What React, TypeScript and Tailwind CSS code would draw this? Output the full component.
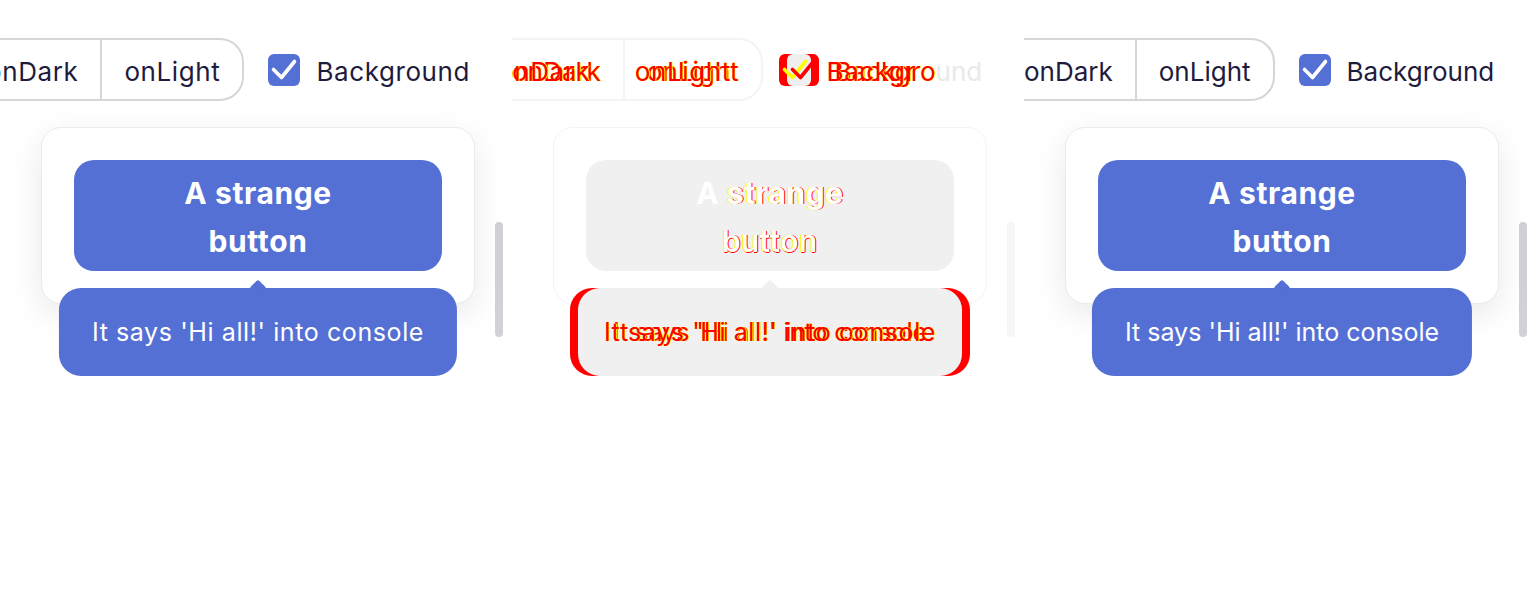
import React from 'react'

type Variant = 'left' | 'right'

const CheckMark = ({ className }: { className?: string }) => (
  <svg viewBox="0 0 32 32" fill="none" className={className}>
    <path
      d="M5.5 15.5 13.5 23.5 26.5 7.5"
      stroke="currentColor"
      strokeWidth={3.6}
      strokeLinecap="round"
      strokeLinejoin="round"
    />
  </svg>
)

/**
 * One side of the comparison: segmented switch, checkbox and the card with a tooltip
 */
const Panel: React.FC<{ variant: Variant }> = ({ variant }) => {
  const isLeft = variant === 'left'
  const track = isLeft ? 'tracking-[0.6px]' : 'tracking-normal'

  return (
    <div className="relative h-[600px] w-[512px] shrink-0 overflow-hidden bg-white text-[#1e1b3d]">
      {/* Top row */}
      <div className={isLeft ? 'flex items-center pt-[38px] ml-[-38px]' : 'flex items-center pt-[38px] ml-[-24px]'}>
        <div className="flex h-[63px] shrink-0 items-stretch rounded-r-[24px] border-2 border-[#d6d6d6] text-[26px]">
          <span className={`flex items-center px-[22px] pt-[3px] ${track}`}>onDark</span>
          <span className={`flex items-center border-l-2 border-[#d6d6d6] px-[22px] pt-[3px] ${track}`}>onLight</span>
        </div>
        <div className="ml-[24px] flex h-[32px] w-[32px] shrink-0 items-center justify-center rounded-[6px] bg-[#5470d5] text-white">
          <CheckMark className="h-[32px] w-[32px]" />
        </div>
        <span className={`ml-[16px] shrink-0 pt-[3px] text-[26px] ${track}`}>Background</span>
      </div>

      {/* Card */}
      <div className="mt-[26px] flex items-start pl-[41px]">
        <div className="relative w-[434px] shrink-0 rounded-[20px] border border-[#ebebeb] bg-white p-[32px] shadow-[0_10px_32px_rgba(0,0,0,0.09)]">
          <button className="flex h-[111px] w-[368px] flex-col items-center justify-center rounded-[20px] bg-[#5470d5] pt-[2px] text-[30px] font-bold leading-[48px] tracking-[0.6px] text-white">
            <span>A strange</span>
            <span>button</span>
          </button>

          {/* Tooltip */}
          <div className="absolute left-1/2 top-[160px] flex h-[88px] -translate-x-1/2 items-center whitespace-nowrap rounded-[22px] bg-[#5470d5] px-[33px] pt-[2px] text-[25px] text-white">
            <span className="absolute left-1/2 top-[-6px] h-[12px] w-[12px] -translate-x-1/2 rotate-45 rounded-[2px] bg-[#5470d5]" />
            <span className={`relative ${track}`}>It says 'Hi all!' into console</span>
          </div>
        </div>

        {/* Scrollbar */}
        <div className="ml-[20px] mt-[95px] h-[115px] w-[8px] shrink-0 rounded-full bg-[#d1d1d6]" />
      </div>
    </div>
  )
}

/**
 * Red text with a shifted ghost copy, the way the pixel diff shows moved glyphs
 */
const DiffText: React.FC<{ children: React.ReactNode; ghost: string }> = ({ children, ghost }) => (
  <span className="relative inline-block whitespace-nowrap">
    <span className="relative text-[#ff0000] [text-shadow:1px_0_0_#ffff00]">{children}</span>
    <span aria-hidden className={`absolute top-0 whitespace-nowrap tracking-[0.6px] text-[#ff0000] [text-shadow:1px_0_0_#ffff00] ${ghost}`}>
      {children}
    </span>
  </span>
)

const DiffPanel: React.FC = () => (
  <div className="relative h-[600px] w-[512px] shrink-0 overflow-hidden bg-white">
    <div className="ml-[-24px] flex items-center pt-[38px]">
      <div className="flex h-[63px] shrink-0 items-stretch rounded-r-[24px] border-2 border-[#f4f4f4] text-[26px]">
        <span className="flex items-center px-[22px] pt-[3px]">
          <DiffText ghost="left-[-14px]">onDark</DiffText>
        </span>
        <span className="flex items-center border-l-2 border-[#f4f4f4] px-[22px] pt-[3px]">
          <DiffText ghost="left-[-12px]">onLight</DiffText>
        </span>
      </div>
      <div className="relative ml-[24px] h-[32px] w-[32px] shrink-0">
        <div className="absolute left-[-8px] top-0 h-[32px] w-[32px] rounded-[6px] bg-[#ff0000]" />
        <div className="absolute left-0 top-0 h-[32px] w-[32px] rounded-[6px] bg-[#ff0000]" />
        <div className="absolute left-0 top-0 h-[32px] w-[24px] rounded-[6px] bg-[#efefef]" />
        <CheckMark className="absolute left-[-8px] top-0 h-[32px] w-[32px] text-[#ffff00]" />
        <CheckMark className="absolute left-0 top-0 h-[32px] w-[32px] text-[#ff0000]" />
      </div>
      <span className="ml-[16px] shrink-0 pt-[3px] text-[26px]">
        <span className="relative inline-block whitespace-nowrap">
          <span className="relative">
            <span className="text-[#ff0000] [text-shadow:1px_0_0_#ffff00]">Backgro</span>
            <span className="text-[#e9e9e9]">und</span>
          </span>
          <span aria-hidden className="absolute left-[-8px] top-0 tracking-[0.6px] text-[#ff0000] [text-shadow:1px_0_0_#ffff00]">
            Backgr
          </span>
        </span>
      </span>
    </div>

    <div className="mt-[26px] flex items-start pl-[41px]">
      <div className="relative w-[434px] shrink-0 rounded-[20px] border border-[#f4f4f4] bg-white p-[32px]">
        <button className="flex h-[111px] w-[368px] flex-col items-center justify-center rounded-[20px] bg-[#f0f0f0] pt-[2px] text-[30px] font-bold leading-[48px] tracking-[0.6px] text-white">
          <span>
            A <span className="[text-shadow:1px_0_0_#ff0000,-1px_0_0_#ffff00]">strange</span>
          </span>
          <span className="font-medium [text-shadow:1px_0_0_#ff0000,-1px_0_0_#ffff00,0_1px_0_#ff0000]">button</span>
        </button>

        <div className="absolute left-1/2 top-[160px] h-[88px] w-[400px] -translate-x-1/2 rounded-[22px] bg-[#ff0000]" />
        <div className="absolute left-1/2 top-[160px] flex h-[88px] w-[384px] -translate-x-1/2 items-center justify-center whitespace-nowrap rounded-[22px] bg-[#f0f0f0] pt-[2px] text-[25px]">
          <span className="absolute left-1/2 top-[-6px] h-[12px] w-[12px] -translate-x-1/2 rotate-45 rounded-[2px] bg-[#f0f0f0]" />
          <DiffText ghost="left-[-9px]">It says 'Hi all!' into console</DiffText>
        </div>
      </div>

      <div className="ml-[20px] mt-[95px] h-[115px] w-[8px] shrink-0 rounded-full bg-[#f6f6f6]" />
    </div>
  </div>
)

export default function App() {
  return (
    <div className="flex h-[600px] w-[1536px] overflow-hidden bg-white font-['Inter',sans-serif]">
      <Panel variant="left" />
      <DiffPanel />
      <Panel variant="right" />
    </div>
  )
}
